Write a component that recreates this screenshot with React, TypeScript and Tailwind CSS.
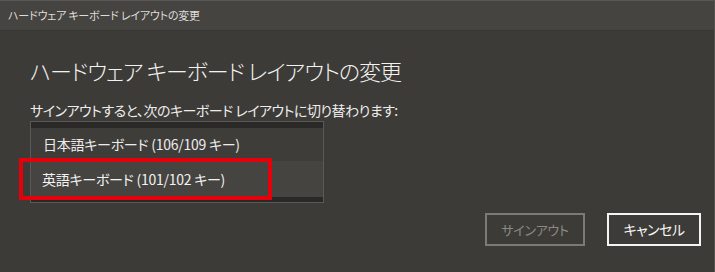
import React from 'react';

const font = "font-['Noto_Sans_CJK_JP','Noto_Sans',sans-serif] [font-feature-settings:'palt']";

const App: React.FC = () => {
  return (
    <div className={`w-[715px] h-[272px] overflow-hidden bg-[#3d3b37] flex flex-col border-r border-[#55534f] ${font}`}>
      {/* Title bar */}
      <div className="h-[31px] shrink-0 bg-[#464440] border-t border-[#5a5854] border-b border-b-[#3a3834] px-[8px] flex items-center text-[11px] tracking-[-0.2px] text-[#dedcd9]">
        ハードウェア キーボード レイアウトの変更
      </div>

      <div className="flex-1 flex flex-col pl-[30px] pr-[13px]">
        {/* Heading */}
        <h1 className="mt-[25px] h-[28px] text-[22px] leading-[28px] tracking-[-1px] text-[#f2f2f2] font-light">
          ハードウェア キーボード レイアウトの変更
        </h1>

        {/* Description */}
        <p className="mt-[17px] h-[18px] text-[14px] leading-[18px] tracking-[-0.5px] text-[#ececec]">
          サインアウトすると、次のキーボード レイアウトに切り替わります:
        </p>

        {/* Layout list */}
        <div className="mt-[2px] w-[294px] h-[82px] bg-[#3f3d3a] border border-[#5b5956] flex flex-col">
          <div className="h-[6px] bg-[#2b2927]" />
          <div className="h-[33px] flex items-center pl-[12px] text-[14px] tracking-[-0.25px] text-[#ececec]">
            日本語キーボード (106/109 キー)
          </div>
          <div className="relative h-[36px] flex items-center pl-[11px] text-[14px] tracking-[-0.25px] text-[#f2f2f2] bg-[#464441]">
            英語キーボード (101/102 キー)
            <div className="absolute left-[-12px] top-[-3px] w-[253px] h-[42px] border-[4px] border-[#e5000a]" />
          </div>
          <div className="flex-1 bg-[#2b2927]" />
        </div>

        {/* Buttons */}
        <div className="mt-[10px] flex justify-end gap-[22px]">
          <div className="w-[100px] h-[33px] border-2 border-[#7c7a77] flex items-center justify-center text-[13px] tracking-[-0.3px] text-[#8b8986]">
            サインアウト
          </div>
          <div className="w-[94px] h-[33px] border-2 border-[#f4f4f4] flex items-center justify-center text-[14px] tracking-[-0.5px] text-[#f6f6f6]">
            キャンセル
          </div>
        </div>
      </div>
    </div>
  );
};

export default App;
